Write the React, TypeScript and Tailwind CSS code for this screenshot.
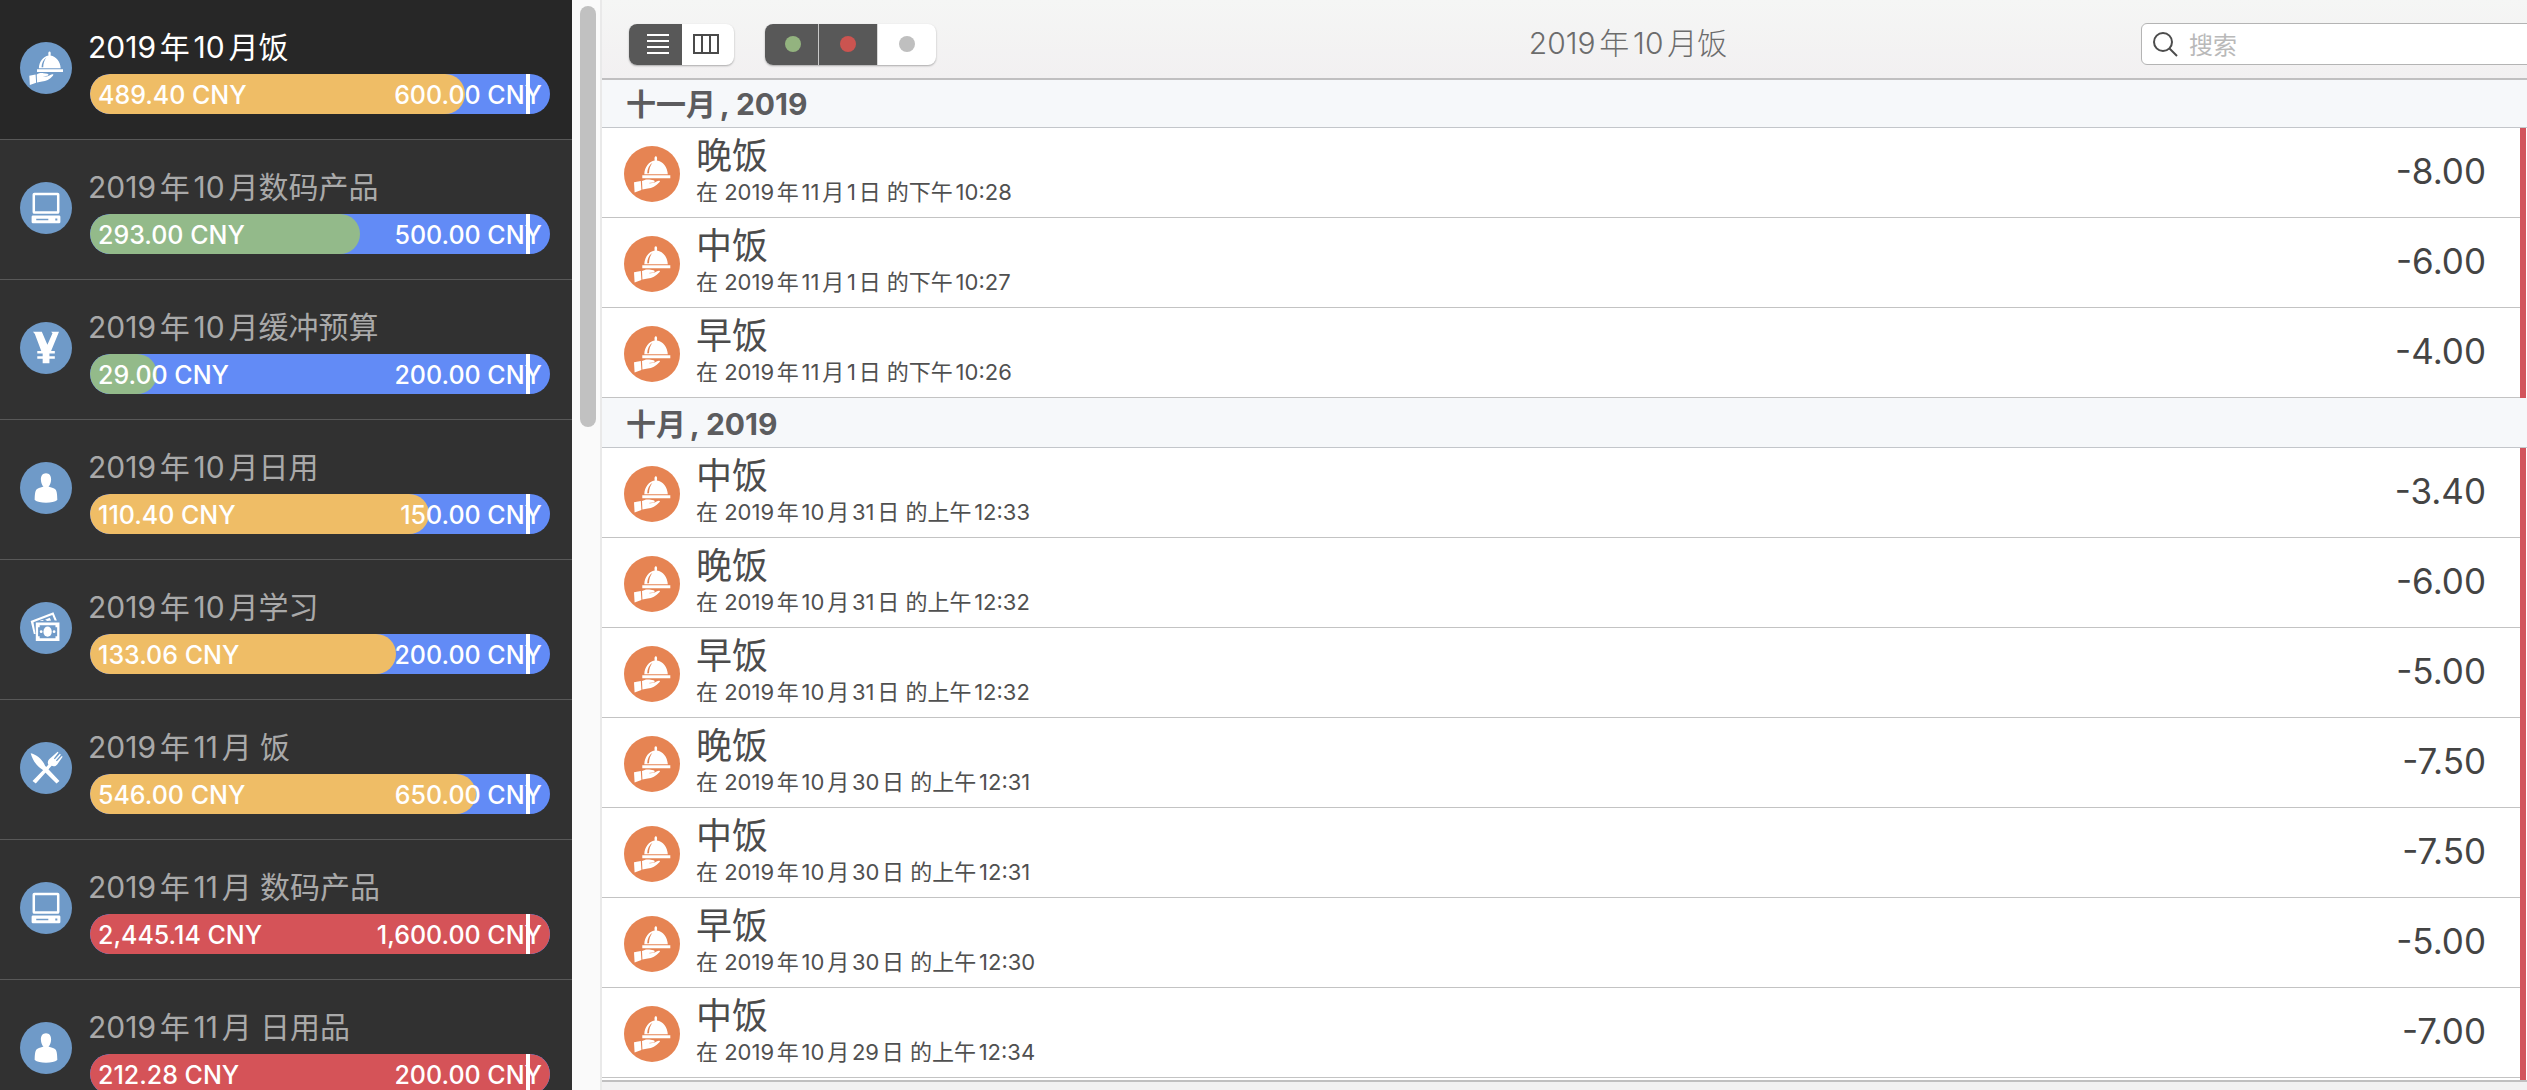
import React from "react";

type IconName = "dish" | "computer" | "yen" | "person" | "money" | "cutlery";

const glyphs: Record<IconName, React.ReactNode> = {
  dish: (
    <>
      <path d="M20.300 28.300c.3-7.500 4.700-12.800 10.400-13.800-.5-2.700-.1-4.300 1.100-4.300s1.600 1.600 1.100 4.300c6 .9 10.600 6.500 10.900 13.800z" />
      <path d="M23.200 27.300c.1-4.800 2.200-8.500 5.300-10.600-2.300 2.900-3.400 6.300-3.500 10.600z" fill="currentColor" />
      <path d="M18.300 29.300h28v3h-28z" />
      <path d="M10 36.300l6.800-1.300.6 9-6.800 2.400zM18 35c2.500-1.500 4.800-1.900 7.300-1.400l4.200.6c1.700.3 1.500 2-.1 2.200l-4.900.7c3.200.5 5.700-.1 8-1.500 2.200-1.400 4.500-1 2.900.7-3.400 3.900-7.400 6-11.700 6.200l-5.300 1.100z" />
    </>
  ),
  computer: (
    <>
      <path fillRule="evenodd" d="M15.500 11.500h25a2 2 0 0 1 2 2v18.700a2 2 0 0 1-2 2h-25a2 2 0 0 1-2-2V13.500a2 2 0 0 1 2-2zm.7 2.700v17.200h23.600V14.200z" />
      <path fillRule="evenodd" d="M14 36h28a1.500 1.500 0 0 1 1.500 1.500v5.500a1.500 1.500 0 0 1-1.500 1.500H14a1.500 1.500 0 0 1-1.500-1.500v-5.500a1.500 1.500 0 0 1 1.500-1.500zm3.500 3.700v1.500h13v-1.500zm20.500-.5v2.200h2.200v-2.200z" />
    </>
  ),
  yen: (
    <path d="M14 10.500h9.500l6 14 5.500-12.500-1.500-1.500h8.500l-8.500 20.700h4v2.600h-5.800v3.100h5.800v2.600h-5.800v5h-7.300v-5h-5.800v-2.600h5.800v-3.100h-5.800v-2.600h4.300L16 13z" />
  ),
  person: (
    <path d="M28 12c3.700 0 5.700 3 5.500 7-.2 3.500-1.200 5.800-2.800 7.500 1.600.9 4.500 1.200 6.500 2.200 2.300 1.300 3 5 3 12.300-2.500 2-7 3-12.200 3s-9.700-1-12.200-3c0-7.300.7-11 3-12.300 2-1 4.900-1.300 6.500-2.200-1.600-1.700-2.600-4-2.800-7.500-.2-4 1.800-7 5.500-7z" />
  ),
  money: (
    <>
      <path fillRule="evenodd" d="M11.500 20.500L36 11l3.700 9h-2.400l-2.500-5.900-20.300 7.800 2.300 12.600h-1.900z" />
      <path d="M21 20.500l3-1.200 2 1.200zM27 19l5-2 1.500 3-4 .5z" />
      <path fillRule="evenodd" d="M17 22h25.500v20H17zm4.200 3v2.200H19.500v9.600h1.700V39h17v-2.200h1.800v-9.600h-1.800V25z" />
      <ellipse cx="29.700" cy="32" rx="4.500" ry="5.500" />
      <circle cx="22.800" cy="32" r="1.500" />
      <circle cx="36.700" cy="32" r="1.500" />
    </>
  ),
  cutlery: (
    <>
      <path d="M11.500 12c6.500 1.500 12.500 6.500 15.500 13.500l15.500 16.500-3.200 2.800L24 29.500c-6-3.500-10.500-10-12.500-17.500z" />
      <path d="M40.500 10.500l1 .8-5 6.500 1 .9 5.500-6 1 .9-5.300 6.300 1 .9 5.300-5.700.9.9-5.800 8.200c-1.700 2-3.900 2.500-6 1.500L17 44.800l-3.500-2.700 17-17.600c-1-2-.7-4 .9-5.800z" />
    </>
  ),
};

function Badge({ name, className }: { name: IconName; className: string }) {
  return (
    <svg viewBox="0 0 56 56" className={`shrink-0 rounded-full ${className}`} aria-hidden="true">
      <rect width="56" height="56" fill="currentColor" />
      <g fill="#fff">{glyphs[name]}</g>
    </svg>
  );
}

interface Budget {
  icon: IconName;
  name: string;
  spent: string;
  total: string;
  tone: "amber" | "green" | "red";
}

const budgets: Budget[] = [
  { icon: "dish", name: "2019年10月饭", spent: "489.40", total: "600.00", tone: "amber" },
  { icon: "computer", name: "2019年10月数码产品", spent: "293.00", total: "500.00", tone: "green" },
  { icon: "yen", name: "2019年10月缓冲预算", spent: "29.00", total: "200.00", tone: "green" },
  { icon: "person", name: "2019年10月日用", spent: "110.40", total: "150.00", tone: "amber" },
  { icon: "money", name: "2019年10月学习", spent: "133.06", total: "200.00", tone: "amber" },
  { icon: "cutlery", name: "2019年11月 饭", spent: "546.00", total: "650.00", tone: "amber" },
  { icon: "computer", name: "2019年11月 数码产品", spent: "2,445.14", total: "1,600.00", tone: "red" },
  { icon: "person", name: "2019年11月 日用品", spent: "212.28", total: "200.00", tone: "red" },
];

const tones = { amber: "bg-[#efbd66]", green: "bg-[#93ba8a]", red: "bg-[#d55358]" };

const amount = (s: string) => Number(s.replace(",", ""));

function BudgetRow({ budget, selected }: { budget: Budget; selected: boolean }) {
  const ratio = Math.min(1, amount(budget.spent) / amount(budget.total));
  return (
    <li className={`border-b border-[#585858] ${selected ? "bg-[#272727]" : "bg-[#313131]"}`}>
      <button type="button" className="flex w-full items-start gap-4 pt-6 pr-[22px] pb-[25px] pl-5 text-left">
        <Badge name={budget.icon} className="mt-[18px] size-[52px] text-[#6f9ac8]" />
        <span className="flex min-w-0 flex-1 flex-col gap-1">
          <span className={`text-[30px] leading-[46px] whitespace-nowrap ${selected ? "text-white" : "text-[#a9a9a9]"}`}>
            {budget.name}
          </span>
          <span className="relative ml-0.5 flex h-10 items-center justify-between overflow-hidden rounded-full bg-[#628bf6] px-2 text-[25px] leading-10 font-medium text-white">
            <span
              className={`absolute inset-y-0 left-0 rounded-full ${tones[budget.tone]}`}
              style={{ width: `${ratio * 100}%` }}
            />
            <span className="relative pt-px">{budget.spent} CNY</span>
            <span className="relative pt-px">{budget.total} CNY</span>
            <span className="absolute inset-y-0 right-5 w-1 bg-white" />
          </span>
        </span>
      </button>
    </li>
  );
}

const sections = [
  {
    title: "十一月, 2019",
    rows: [
      ["晚饭", "在 2019年11月1日 的下午10:28", "-8.00"],
      ["中饭", "在 2019年11月1日 的下午10:27", "-6.00"],
      ["早饭", "在 2019年11月1日 的下午10:26", "-4.00"],
    ],
  },
  {
    title: "十月, 2019",
    rows: [
      ["中饭", "在 2019年10月31日 的上午12:33", "-3.40"],
      ["晚饭", "在 2019年10月31日 的上午12:32", "-6.00"],
      ["早饭", "在 2019年10月31日 的上午12:32", "-5.00"],
      ["晚饭", "在 2019年10月30日 的上午12:31", "-7.50"],
      ["中饭", "在 2019年10月30日 的上午12:31", "-7.50"],
      ["早饭", "在 2019年10月30日 的上午12:30", "-5.00"],
      ["中饭", "在 2019年10月29日 的上午12:34", "-7.00"],
    ],
  },
];

function Toolbar() {
  return (
    <header className="overflow-hidden border-b-2 border-[#c0bfc0] bg-linear-to-b from-[#f5f6f5] to-[#f2f0f1]">
      <div className="flex h-[78px] w-[calc(100%+126px)] items-center pt-2.5 pr-6 pl-[27px]">
        <div className="flex flex-1 gap-[31px]">
          <div className="flex h-[41px] overflow-hidden rounded-lg bg-white shadow-[0_1px_2px_rgba(0,0,0,0.3)]">
            <button type="button" aria-label="列表" className="flex w-[53px] items-center justify-center bg-[#585858] pl-1">
              <svg viewBox="0 0 22 20" className="h-5 w-[22px]" fill="#fff">
                <path d="M0 0h22v2H0zM0 6h22v2H0zM0 12h22v2H0zM0 18h22v2H0z" />
              </svg>
            </button>
            <button type="button" aria-label="分栏" className="flex w-[52px] items-center justify-center pr-1">
              <svg viewBox="0 0 26 20" className="h-5 w-[26px]" fill="none" stroke="#4a4a4a" strokeWidth="2">
                <path d="M1 1h24v18H1zM9 1v18M17 1v18" />
              </svg>
            </button>
          </div>
          <div className="flex h-[41px] overflow-hidden rounded-lg bg-white shadow-[0_1px_2px_rgba(0,0,0,0.3)]">
            <button type="button" aria-label="收入" className="flex w-[54px] items-center justify-center border-r border-[#c9c9c9] bg-[#585858] pl-0.5">
              <span className="size-4 rounded-full bg-[#93b37f]" />
            </button>
            <button type="button" aria-label="支出" className="flex w-[58px] items-center justify-center bg-[#585858]">
              <span className="size-4 rounded-full bg-[#cb5450]" />
            </button>
            <button type="button" aria-label="转账" className="flex w-[59px] items-center justify-center border-l border-[#d8d8d8]">
              <span className="size-4 rounded-full bg-[#bfbfbf]" />
            </button>
          </div>
        </div>
        <h1 className="pr-0.5 pb-0.5 text-[30px] leading-10 font-light text-[#6c6c6c]">2019年10月饭</h1>
        <div className="flex flex-1 justify-end">
          <label className="flex h-[42px] w-[488px] items-center gap-[11px] rounded-md border border-[#b4b4b4] bg-white pl-[11px]">
            <svg viewBox="0 0 25 25" className="size-[25px] shrink-0" fill="none" stroke="#4c4c4c" strokeWidth="2">
              <circle cx="10" cy="10" r="9" />
              <path d="M16.500 16.500L24 24" />
            </svg>
            <input
              type="search"
              aria-label="搜索"
              placeholder="搜索"
              className="min-w-0 flex-1 bg-transparent pt-1 text-2xl leading-9 outline-none placeholder:text-[#b9b9b9]"
            />
          </label>
        </div>
      </div>
    </header>
  );
}

export default function App() {
  return (
    <div className="flex h-screen overflow-hidden bg-[#f2f1f2] font-['Inter','Noto_Sans_CJK_SC',sans-serif] [text-autospace:normal]" lang="zh-CN">
      <nav aria-label="预算" className="w-[572px] shrink-0 overflow-hidden bg-[#313131]">
        <ul>
          {budgets.map((b, i) => (
            <BudgetRow key={b.name} budget={b} selected={i === 0} />
          ))}
        </ul>
      </nav>
      <div className="w-[30px] shrink-0 border-r-2 border-[#e9e9e9] bg-[#fafafa] pt-1.5 pl-2">
        <div className="h-[421px] w-4 rounded-full bg-[#c1c1c1]" />
      </div>
      <main className="min-w-0 flex-1">
        <Toolbar />
        <div className="border-b-2 border-[#c0bfc0] bg-white">
          {sections.map((s, i) => (
            <section key={s.title}>
              <h2
                className={`border-b border-[#c3c6ca] bg-[#f6f8fa] pl-6 text-[30px] leading-[45px] font-bold text-[#5c5c5e] ${i === 0 ? "pt-0.5" : "pt-1"}`}
              >
                {s.title}
              </h2>
              <ul className={`mr-px border-r-6 border-[#d2545c] ${i === sections.length - 1 ? "pb-0.5" : ""}`}>
                {s.rows.map(([name, when, value]) => (
                  <li key={name + when} className="flex h-[90px] items-center gap-4 border-b border-b-[#c3c3c3] pr-[34px] pl-[22px]">
                    <Badge name="dish" className="mt-[3px] size-14 text-[#e68453]" />
                    <div className="flex-1 pb-1.5">
                      <div className="text-4xl leading-[44px] text-[#4c4c4c]">{name}</div>
                      <div className="text-[22px] leading-7 text-[#505050]">{when}</div>
                    </div>
                    <div className="pb-1 text-[35px] leading-[44px] text-[#444444]">{value}</div>
                  </li>
                ))}
              </ul>
            </section>
          ))}
        </div>
      </main>
    </div>
  );
}
